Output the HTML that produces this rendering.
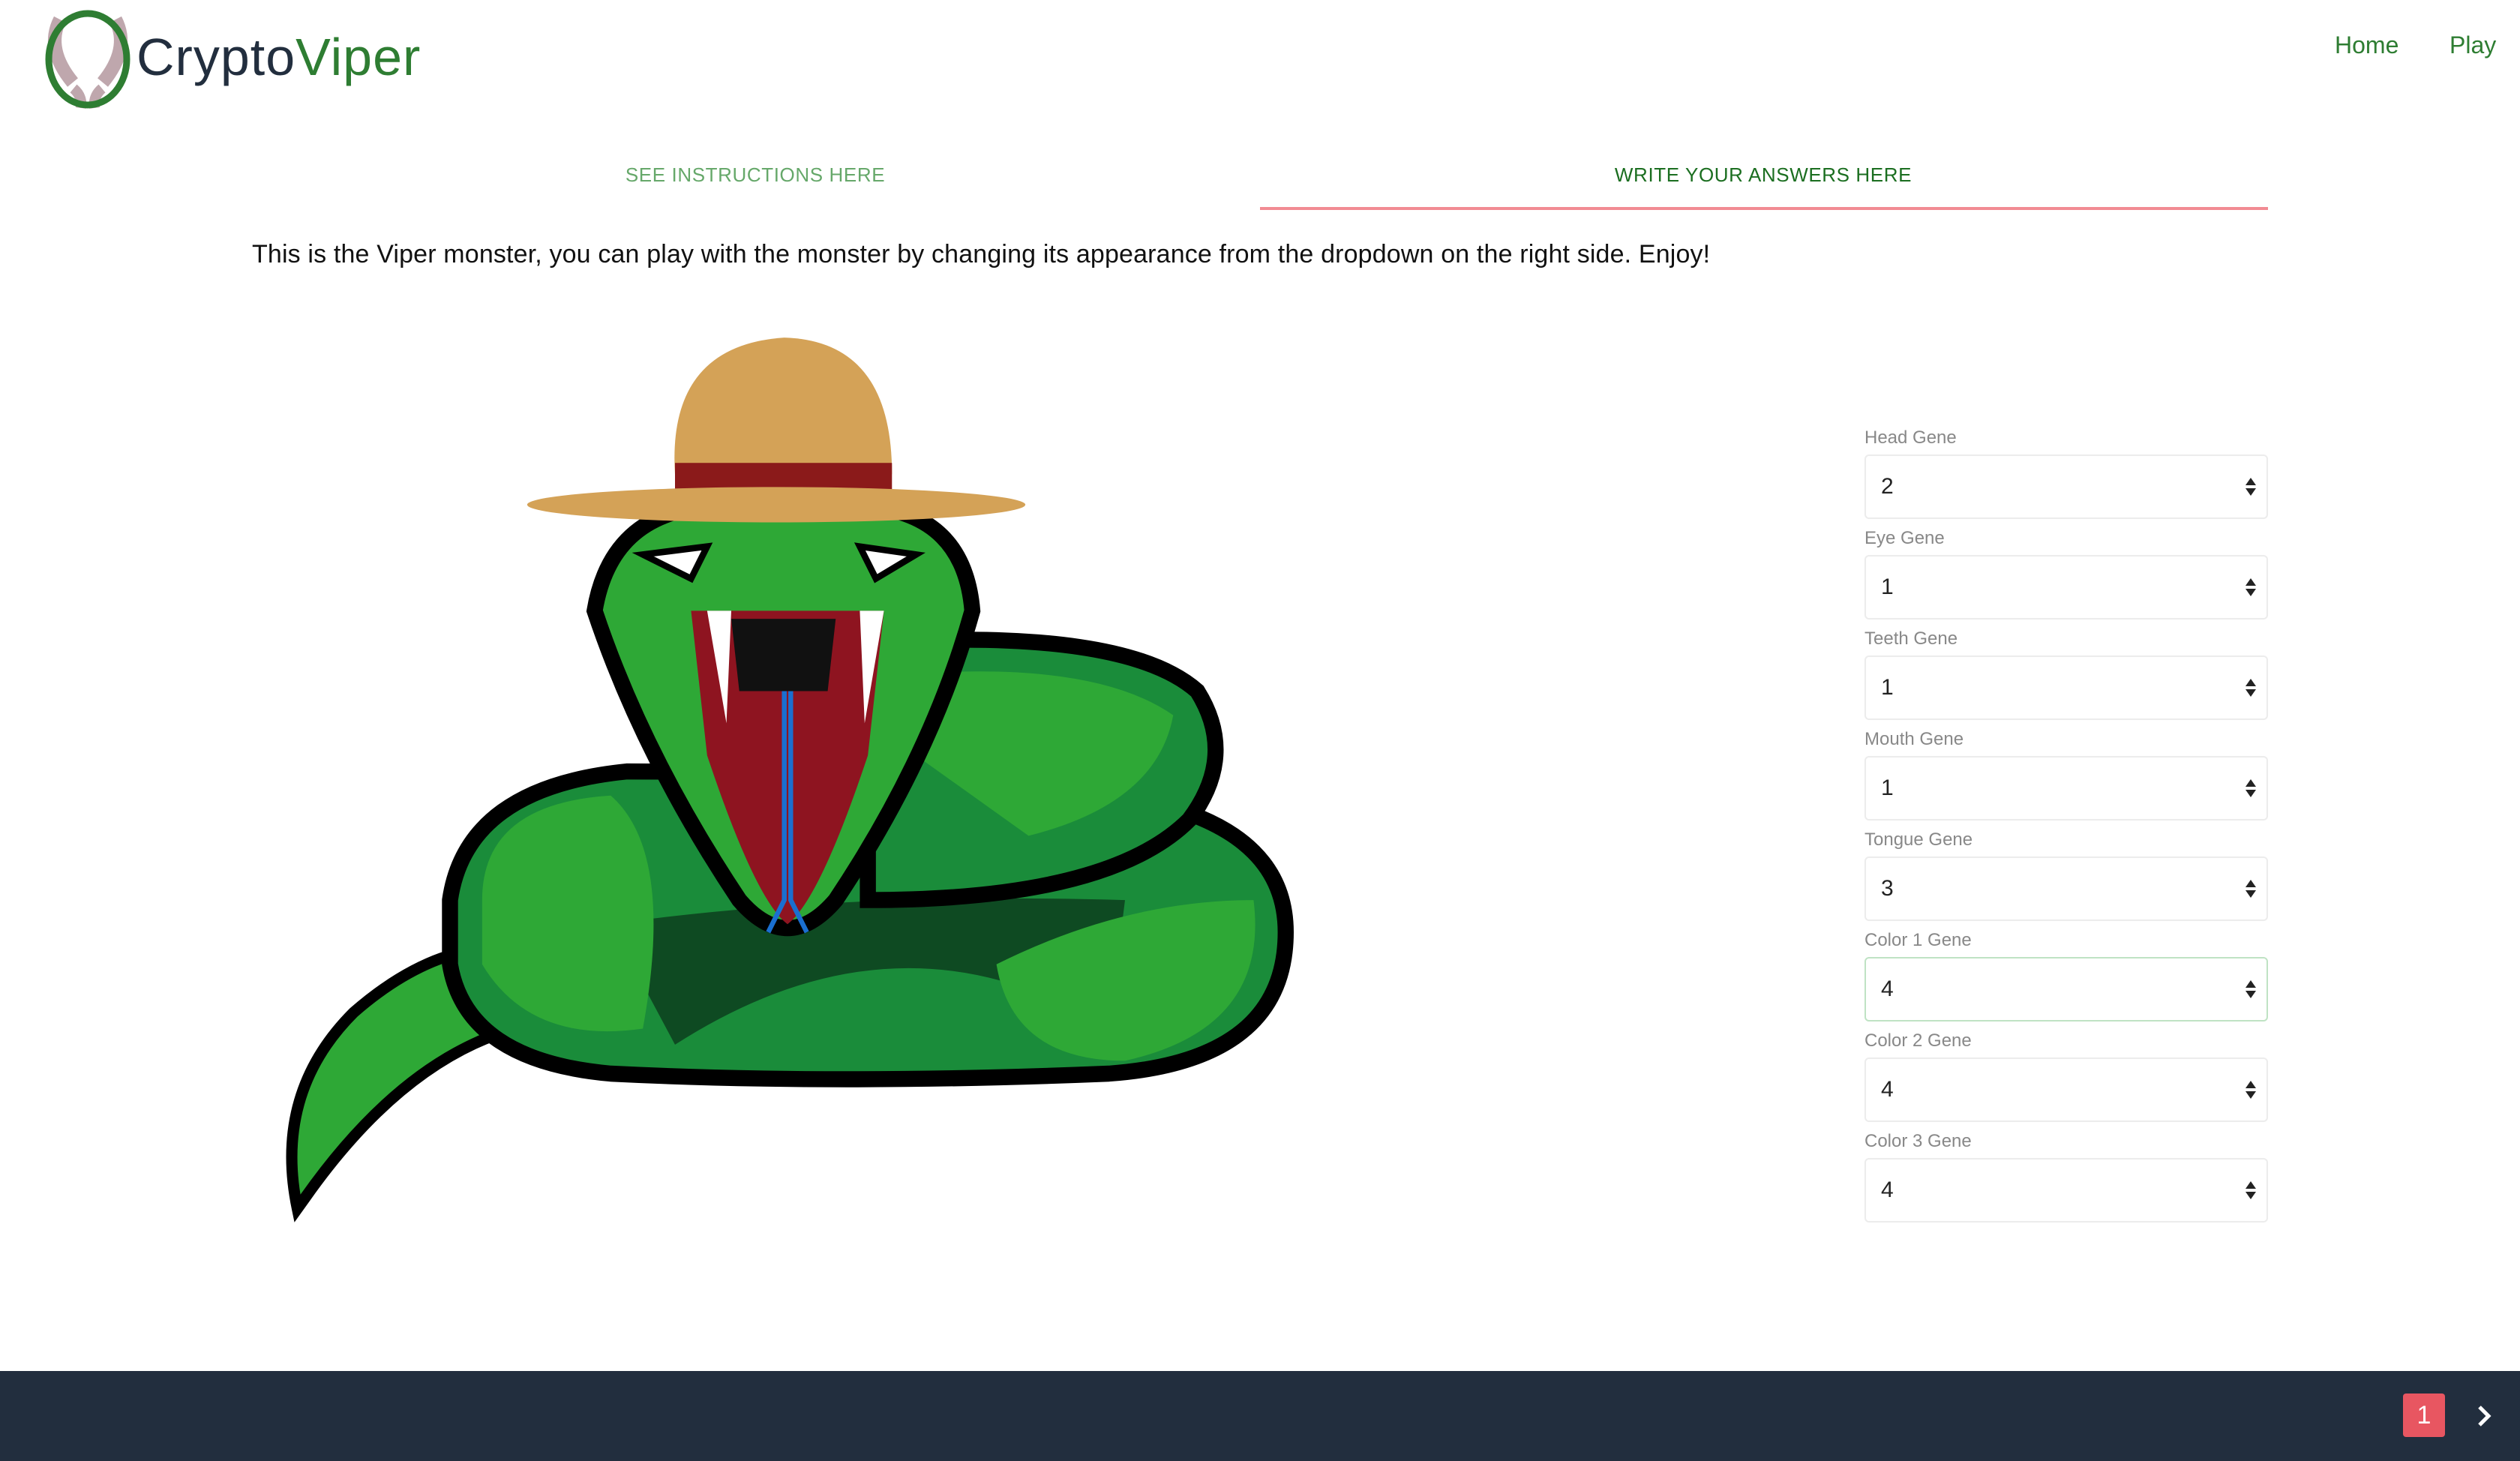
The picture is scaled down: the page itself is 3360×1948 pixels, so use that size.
<!DOCTYPE html>
<html><head><meta charset="utf-8"><style>
html,body{margin:0;padding:0;width:3360px;height:1948px;background:#fff;overflow:hidden;font-family:"Liberation Sans",Arial,sans-serif;position:relative}
.abs{position:absolute}
.nav{color:#2e7d32;font-size:32px;top:42px}
.tab{top:218px;font-size:26px;letter-spacing:0.6px;transform:translateX(-50%);white-space:nowrap}
.lbl{left:2486px;font-size:24px;color:#888}
.sel{left:2486px;width:538px;height:86px;border:2px solid #ececec;border-radius:6px;box-sizing:border-box}
.sel span{position:absolute;left:20px;top:24px;font-size:30px;color:#222}
.sel i{position:absolute;right:14px;top:29px;width:0;height:0;border-left:7px solid transparent;border-right:7px solid transparent;border-bottom:10px solid #222}
.sel b{position:absolute;right:14px;top:43px;width:0;height:0;border-left:7px solid transparent;border-right:7px solid transparent;border-top:10px solid #222}
</style></head><body>
<svg class="abs" style="left:0;top:0" width="220" height="160">
<path d="M80 26 Q60 65 97 110" stroke="#bfa7ad" stroke-width="18" fill="none"/>
<path d="M154 26 Q174 65 137 110" stroke="#bfa7ad" stroke-width="18" fill="none"/>
<path d="M98 118 Q110 128 108 144 M136 118 Q124 128 126 144" stroke="#bfa7ad" stroke-width="14" fill="none"/>
<ellipse cx="117" cy="79" rx="52" ry="61" fill="none" stroke="#2e7d32" stroke-width="9"/>
</svg>
<div class="abs" style="left:182px;top:36px;font-size:70px;line-height:80px;color:#222e3e;letter-spacing:1px">Crypto<span style="color:#2e7d32">Viper</span></div>
<div class="abs nav" style="left:3113px">Home</div>
<div class="abs nav" style="left:3266px">Play</div>
<div class="abs tab" style="left:1007px;color:#66a86a">SEE INSTRUCTIONS HERE</div>
<div class="abs tab" style="left:2351px;color:#1b6e20">WRITE YOUR ANSWERS HERE</div>
<div class="abs" style="left:1680px;top:276px;width:1344px;height:4px;background:#f28b93"></div>
<div class="abs" style="left:336px;top:320px;font-size:34px;letter-spacing:0.15px;color:#111;white-space:nowrap">This is the Viper monster, you can play with the monster by changing its appearance from the dropdown on the right side. Enjoy!</div>

<svg class="abs" style="left:0;top:0" width="3360" height="1948" viewBox="0 0 1568 909">
<path d="M185 752 Q170 680 220 630 Q260 595 300 590 L320 640 Q250 660 190 745 Z" fill="#2ea836" stroke="#000" stroke-width="7"/>
<path d="M280 560 Q290 490 390 480 Q600 480 720 500 Q800 520 800 580 Q800 660 690 668 Q520 675 380 668 Q290 660 280 600 Z" fill="#1a8c3a" stroke="#000" stroke-width="10"/>
<path d="M380 575 Q520 555 700 560 L690 640 Q560 560 420 650 Z" fill="#0e4a22"/>
<path d="M300 560 Q300 500 380 495 Q420 530 400 640 Q330 650 300 600 Z" fill="#2ea836"/>
<path d="M620 600 Q700 560 780 560 Q790 640 700 660 Q630 660 620 600 Z" fill="#2ea836"/>
<path d="M540 400 Q700 390 745 430 Q770 470 740 510 Q690 560 540 560 Z" fill="#1a8c3a" stroke="#000" stroke-width="10"/>
<path d="M560 420 Q680 410 730 445 Q720 500 640 520 L570 470 Z" fill="#2ea836"/>
<path d="M370 380 Q380 320 440 315 L540 315 Q600 320 605 380 Q580 470 520 560 Q490 595 460 560 Q400 470 370 380 Z" fill="#2ea836" stroke="#000" stroke-width="10"/>
<path d="M430 380 L550 380 L540 470 Q510 560 490 575 Q470 560 440 470 Z" fill="#8e1420"/>
<path d="M455 385 L520 385 L515 430 L460 430 Z" fill="#111"/>
<path d="M440 380 L455 380 L452 450 Z M535 380 L550 380 L538 450 Z" fill="#fff"/>
<path d="M488 430 L488 560 L478 580 M492 430 L492 560 L502 580" stroke="#1a6fd0" stroke-width="3" fill="none"/>
<path d="M400 345 L440 340 L430 360 Z M570 345 L535 340 L545 360 Z" fill="#fff" stroke="#000" stroke-width="4"/>
<path d="M420 295 Q415 215 488 210 Q555 212 555 295 Z" fill="#d4a257"/>
<rect x="420" y="288" width="135" height="22" fill="#8b1a1a"/>
<ellipse cx="483" cy="314" rx="155" ry="11" fill="#d4a257"/>
</svg>

<div class="abs lbl" style="top:570px">Head Gene</div>
<div class="abs sel" style="top:606px"><span>2</span><i></i><b></b></div>
<div class="abs lbl" style="top:704px">Eye Gene</div>
<div class="abs sel" style="top:740px"><span>1</span><i></i><b></b></div>
<div class="abs lbl" style="top:838px">Teeth Gene</div>
<div class="abs sel" style="top:874px"><span>1</span><i></i><b></b></div>
<div class="abs lbl" style="top:972px">Mouth Gene</div>
<div class="abs sel" style="top:1008px"><span>1</span><i></i><b></b></div>
<div class="abs lbl" style="top:1106px">Tongue Gene</div>
<div class="abs sel" style="top:1142px"><span>3</span><i></i><b></b></div>
<div class="abs lbl" style="top:1240px">Color 1 Gene</div>
<div class="abs sel" style="top:1276px;border-color:#bfe3c4"><span>4</span><i></i><b></b></div>
<div class="abs lbl" style="top:1374px">Color 2 Gene</div>
<div class="abs sel" style="top:1410px"><span>4</span><i></i><b></b></div>
<div class="abs lbl" style="top:1508px">Color 3 Gene</div>
<div class="abs sel" style="top:1544px"><span>4</span><i></i><b></b></div>

<div class="abs" style="left:0;top:1828px;width:3360px;height:120px;background:#222e3e"></div>
<div class="abs" style="left:3204px;top:1858px;width:56px;height:58px;background:#e85661;border-radius:4px;color:#fff;font-size:34px;text-align:center;line-height:58px">1</div>
<svg class="abs" style="left:3298px;top:1870px" width="30" height="36"><path d="M8 6 L20 18 L8 30" stroke="#fff" stroke-width="5" fill="none"/></svg>
</body></html>
